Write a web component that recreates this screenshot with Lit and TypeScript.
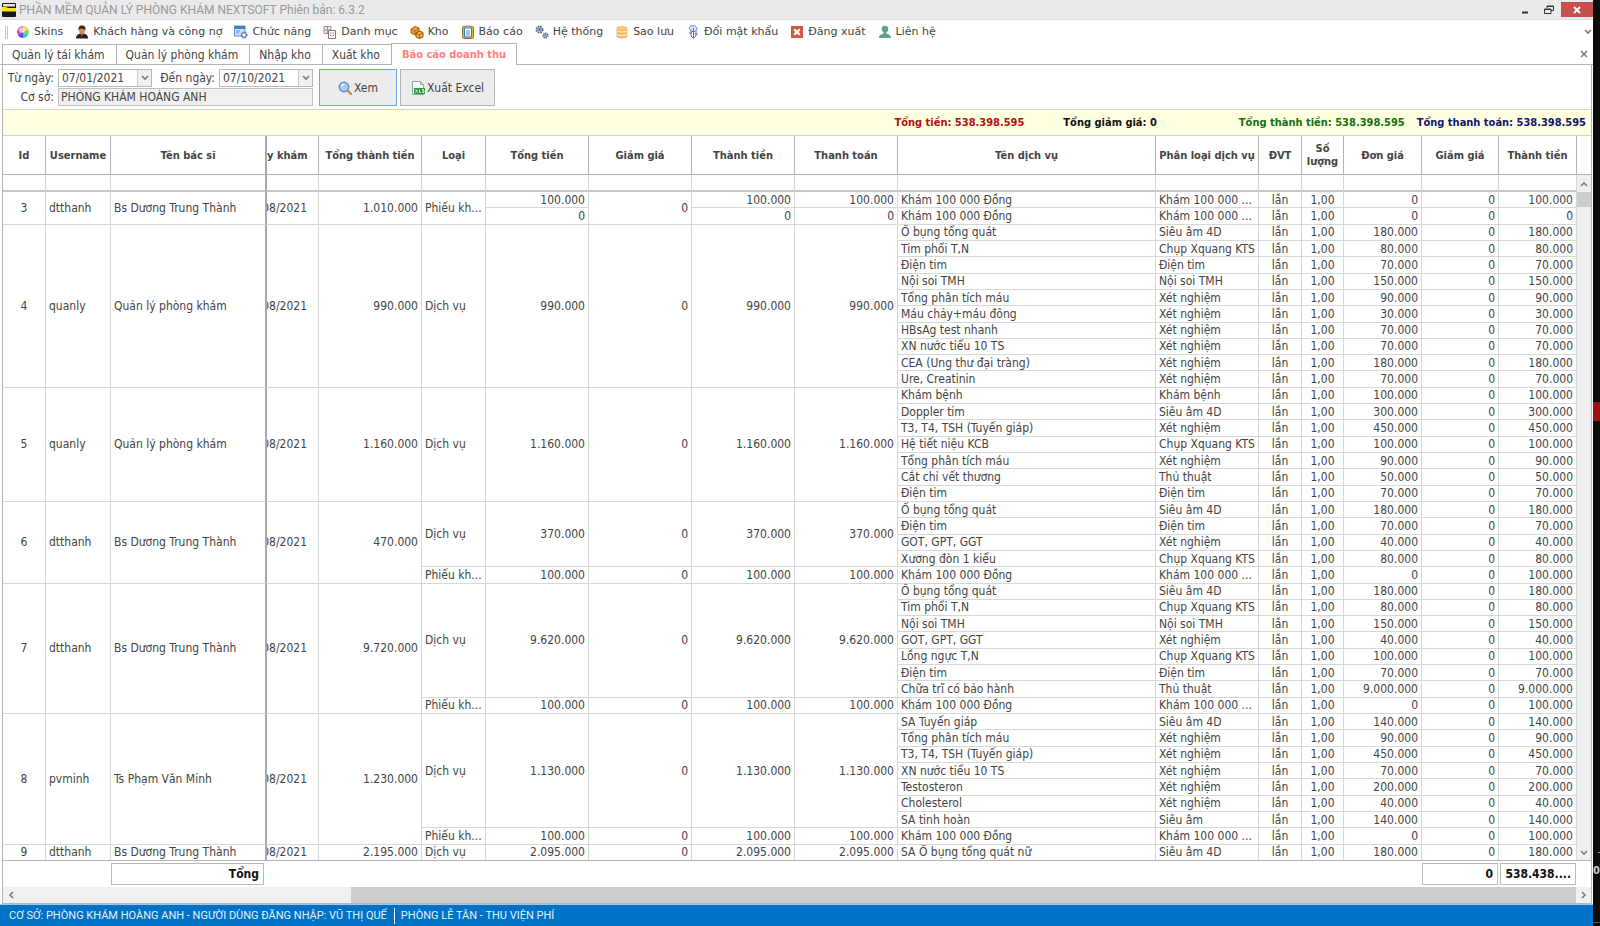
import { LitElement, html, css, svg, nothing } from "lit";
import { customElement } from "lit/decorators.js";

type Service = [string, string, string, string];
interface Block { kind: string; total: string; services: Service[]; }
interface Visit { id: number; user: string; doctor: string; total: string; blocks: Block[]; }

const s = (name: string, group: string, price: string, sum = price): Service => [name, group, price, sum];
const lab = "Xét nghiệm";
const exam: Block = { kind: "Phiếu kh...", total: "100.000", services: [s("Khám 100 000 Đồng", "Khám 100 000 ...", "0", "100.000")] };

const VISITS: Visit[] = [
  { id: 4, user: "quanly", doctor: "Quản lý phòng khám", total: "990.000", blocks: [{ kind: "Dịch vụ", total: "990.000", services: [
    s("Ổ bụng tổng quát", "Siêu âm 4D", "180.000"), s("Tim phổi T,N", "Chụp Xquang KTS", "80.000"), s("Điện tim", "Điện tim", "70.000"),
    s("Nội soi TMH", "Nội soi TMH", "150.000"), s("Tổng phân tích máu", lab, "90.000"), s("Máu chảy+máu đông", lab, "30.000"),
    s("HBsAg test nhanh", lab, "70.000"), s("XN nước tiểu 10 TS", lab, "70.000"), s("CEA (Ung thư đại tràng)", lab, "180.000"), s("Ure, Creatinin", lab, "70.000")] }] },
  { id: 5, user: "quanly", doctor: "Quản lý phòng khám", total: "1.160.000", blocks: [{ kind: "Dịch vụ", total: "1.160.000", services: [
    s("Khám bệnh", "Khám bệnh", "100.000"), s("Doppler tim", "Siêu âm 4D", "300.000"), s("T3, T4, TSH (Tuyến giáp)", lab, "450.000"),
    s("Hệ tiết niệu KCB", "Chụp Xquang KTS", "100.000"), s("Tổng phân tích máu", lab, "90.000"), s("Cắt chỉ vết thương", "Thủ thuật", "50.000"), s("Điện tim", "Điện tim", "70.000")] }] },
  { id: 6, user: "dtthanh", doctor: "Bs Dương Trung Thành", total: "470.000", blocks: [{ kind: "Dịch vụ", total: "370.000", services: [
    s("Ổ bụng tổng quát", "Siêu âm 4D", "180.000"), s("Điện tim", "Điện tim", "70.000"), s("GOT, GPT, GGT", lab, "40.000"), s("Xương đòn 1 kiểu", "Chụp Xquang KTS", "80.000")] }, exam] },
  { id: 7, user: "dtthanh", doctor: "Bs Dương Trung Thành", total: "9.720.000", blocks: [{ kind: "Dịch vụ", total: "9.620.000", services: [
    s("Ổ bụng tổng quát", "Siêu âm 4D", "180.000"), s("Tim phổi T,N", "Chụp Xquang KTS", "80.000"), s("Nội soi TMH", "Nội soi TMH", "150.000"),
    s("GOT, GPT, GGT", lab, "40.000"), s("Lồng ngực T,N", "Chụp Xquang KTS", "100.000"), s("Điện tim", "Điện tim", "70.000"), s("Chữa trĩ có bảo hành", "Thủ thuật", "9.000.000")] }, exam] },
  { id: 8, user: "pvminh", doctor: "Ts Phạm Văn Minh", total: "1.230.000", blocks: [{ kind: "Dịch vụ", total: "1.130.000", services: [
    s("SA Tuyến giáp", "Siêu âm 4D", "140.000"), s("Tổng phân tích máu", lab, "90.000"), s("T3, T4, TSH (Tuyến giáp)", lab, "450.000"),
    s("XN nước tiểu 10 TS", lab, "70.000"), s("Testosteron", lab, "200.000"), s("Cholesterol", lab, "40.000"), s("SA tinh hoàn", "Siêu âm", "140.000")] }, exam] },
  { id: 9, user: "dtthanh", doctor: "Bs Dương Trung Thành", total: "2.195.000", blocks: [{ kind: "Dịch vụ", total: "2.095.000", services: [
    s("SA Ổ bụng tổng quát nữ", "Siêu âm 4D", "180.000")] }] },
];

const HEADS = ["Id", "Username", "Tên bác sĩ", "y khám", "Tổng thành tiền", "Loại", "Tổng tiền", "Giảm giá", "Thành tiền", "Thanh toán",
  "Tên dịch vụ", "Phân loại dịch vụ", "ĐVT", "Số lượng", "Đơn giá", "Giảm giá", "Thành tiền"];

const ICONS: Record<string, unknown> = {
  skins: svg`<circle cx="7" cy="7" r="6" fill="#fff"/><path d="M7 7V1A6 6 0 0 1 12.2 4z" fill="#f7d65a"/><path d="M7 7l5.2-3a6 6 0 0 1 0 6z" fill="#7be04a"/><path d="M7 7l5.2 3A6 6 0 0 1 7 13z" fill="#35c8d8"/><path d="M7 7v6a6 6 0 0 1-5.200-3z" fill="#5a50e0"/><path d="M7 7l-5.200 3a6 6 0 0 1 0-6z" fill="#e23cc8"/><path d="M7 7L1.800 4A6 6 0 0 1 7 1z" fill="#f6607a"/><circle cx="6" cy="5" r="2.800" fill="#fff" opacity=".65"/>`,
  person: svg`<path d="M1 13.500c0-3.500 2-5 6-5s6 1.500 6 5z" fill="#2a2525"/><path d="M5.500 8.500L7 12l1.500-3.500z" fill="#b54a3a"/><ellipse cx="7" cy="5" rx="3" ry="4" fill="#c98d5e"/><path d="M3.600 5.500C3 1.500 5 .5 7.200.5S11 2 10.400 5.500C9.500 3.500 6 4 5 3.500z" fill="#3b2417"/>`,
  form: svg`<rect x=".5" y="1" width="10.500" height="10" fill="#d5e6f8" stroke="#5b8fc9"/><rect x="1" y="1" width="10" height="3" fill="#3f7fc8"/><path d="M2 6h4M2 8h3" stroke="#5b8fc9"/><circle cx="10" cy="10" r="2.800" fill="#9db8d8" stroke="#5c7698" stroke-dasharray="1.500 .8" stroke-width="1.500"/><circle cx="10" cy="10" r="1.200" fill="#fff"/>`,
  list: svg`<path d="M1 1.500h7v7H1zM1 5h7M4.500 1.500v7" fill="#f4ecea" stroke="#a58c8c"/><path d="M5.500 5.500h7v8h-7z" fill="#fff" stroke="#7a7a98"/><path d="M7 8h1.500M7 10.500h1.500M9.500 8H11M9.500 10.500H11" stroke="#c56b6b" stroke-width="1.200"/>`,
  boxes: svg`<path d="M1 4l4-2.500L9 3v5L5 10 1 8z" fill="#e9a12c" stroke="#a86410"/><path d="M1 4l4 2 4-3M5 6v4" stroke="#a86410" fill="none" stroke-width=".8"/><path d="M6 8l3.500-2L13 7.500V12l-3.500 1.500L6 12z" fill="#f0b243" stroke="#8e5009"/><path d="M6 8l3.500 2L13 7.500M9.500 10v3.500" stroke="#8e5009" fill="none" stroke-width=".8"/>`,
  report: svg`<rect x="1.500" y="1.500" width="11" height="12" rx="1" fill="#e8b040" stroke="#9b7430"/><path d="M3.500 3h7v9h-7z" fill="#f6fbff" stroke="#3c7cb8"/><rect x="4.500" y=".5" width="5" height="2.500" fill="#8fa0b0"/><path d="M5 6h4M5 8h4M5 10h4" stroke="#4f8fc6"/>`,
  gears: svg`<circle cx="4.500" cy="4.500" r="3" fill="#c8d3ea" stroke="#5a6a98" stroke-width="2" stroke-dasharray="1.600 .8"/><circle cx="4.500" cy="4.500" r="1.200" fill="#4f5f90"/><circle cx="10.500" cy="10.500" r="2.300" fill="#c8d3ea" stroke="#5a6a98" stroke-width="1.600" stroke-dasharray="1.300 .6"/><circle cx="10.500" cy="10.500" r=".9" fill="#4f5f90"/>`,
  disk: svg`<path d="M1.500 3v8.500c0 2.600 11 2.600 11 0V3z" fill="#f0bb68"/><ellipse cx="7" cy="2.800" rx="5.500" ry="2" fill="#f5ca85"/><path d="M1.500 5.500c1 2 10 2 11 0M1.500 9c1 2 10 2 11 0" fill="none" stroke="#fff" stroke-width=".8"/>`,
  key: svg`<path d="M4 4.500C2 2 5 .5 7.500.8S12 3 10.500 5L9 6.500H5.500z" fill="#dfe6fa" stroke="#5a74c4"/><path d="M7.500 3v10M5 6v5l2.500 2.500L10 11V6M3 8h3M9 9h3" fill="none" stroke="#5a74c4"/>`,
  exit: svg`<rect x="1" y="1" width="12" height="12" fill="#d2553d"/><path d="M4.200 4.200l5.600 5.600M9.800 4.200L4.200 9.800" stroke="#fff" stroke-width="2.300"/>`,
  contact: svg`<circle cx="7" cy="4" r="3.300" fill="#5da48a"/><path d="M1 13c0-3.500 3-3.500 4.500-4.500V6h3v2.500C10 9.500 13 9.500 13 13z" fill="#5da48a"/>`,
  search: svg`<path d="M9.500 9.500l3.500 3.500" stroke="#c08a4c" stroke-width="2.400" stroke-linecap="round"/><circle cx="6" cy="6" r="4.700" fill="#a9cdf2" stroke="#5f8cc8" stroke-width="1.500"/><path d="M3.500 5.500A2.800 2.800 0 0 1 6 3.200" stroke="#fff" fill="none" stroke-width="1.300"/>`,
  excel: svg`<path d="M1.500.5h8l3 3v10h-11z" fill="#f8fbf8" stroke="#8fa89a"/><path d="M9.500.5v3h3" fill="none" stroke="#8fa89a"/><rect x="3" y="7" width="11" height="6" fill="#2f9a3c"/><path d="M4.500 8.500l2 3M6.500 8.500l-2 3M8.500 8.500v3H10M13 8.500h-1.500v1.500H13v1.500h-1.800" stroke="#fff" fill="none" stroke-width=".8"/>`,
};
const icon = (n: string) => html`<svg class="ico" viewBox="0 0 14 14" aria-hidden="true">${ICONS[n]}</svg>`;
const chevron = (d: string) => html`<svg class="chev" viewBox="0 0 8 8" aria-hidden="true"><path d=${d} fill="none" stroke="#7c7c7c" stroke-width="1.600"/></svg>`;
const UP = "M1 6l3-3 3 3", DOWN = "M1 2l3 3 3-3", LEFT = "M6 1L3 4l3 3", RIGHT = "M2 1l3 3-3 3";

const MENU: [string, string][] = [["skins", "Skins"], ["person", "Khách hàng và công nợ"], ["form", "Chức năng"], ["list", "Danh mục"], ["boxes", "Kho"],
  ["report", "Báo cáo"], ["gears", "Hệ thống"], ["disk", "Sao lưu"], ["key", "Đổi mật khẩu"], ["exit", "Đăng xuất"], ["contact", "Liên hệ"]];

@customElement("app-root")
export class AppRoot extends LitElement {
  static styles = css`
    :host { display: flex; height: 100vh; overflow: hidden; background: #0d0d0d; color: #444; font: 12px/14px "DejaVu Sans Condensed", "DejaVu Sans", sans-serif; }
    * { box-sizing: border-box; }
    button, input { font: inherit; color: inherit; margin: 0; }
    .window { flex: 1; min-width: 0; display: flex; flex-direction: column; background: #fff; }
    .edge { flex: none; width: 7px; overflow: hidden; display: flex; flex-direction: column; align-items: flex-end; color: #ccc; font-size: 11px; font-weight: bold; }
    .edge .gap { height: 402px; }
    .edge .mark { width: 100%; height: 19px; background: #9c1111; margin-bottom: auto; }
    .edge .tick { width: 2px; height: 1px; background: #999; margin-bottom: 11px; }
    .edge .foot { width: 100%; height: 4px; border-top: 1px solid #555; margin-top: 44px; }
    .ico { width: 14px; height: 14px; flex: none; display: block; }
    .chev { width: 8px; height: 8px; display: block; }

    .title { height: 20px; display: flex; align-items: center; background: #eaeaea; border-bottom: 1px solid #e0e0e0; color: #999; padding-left: 5px; font: 12px/16px Roboto, sans-serif; }
    .logo { width: 14px; height: 14px; flex: none; margin: 0 3px 0 -3px; }
    .title h1 { font: inherit; margin: 0; flex: 1; white-space: nowrap; }
    .winbtn { border: 0; padding: 0; background: none; height: 15px; width: 24px; display: grid; place-items: center; }
    .winbtn.close { background: #c75050; width: 32px; }
    .winbtn svg { width: 10px; height: 10px; }

    .menu { height: 24px; display: flex; align-items: center; gap: 12px; padding: 0 1px 0 5px; font: 11px/14px "DejaVu Sans", sans-serif; }
    .grip { width: 3px; height: 13px; border: 1px solid #c4c4c4; border-width: 0 1px; margin-right: -4px; }
    .menu button { border: 0; background: none; padding: 0; display: flex; align-items: center; gap: 4px; white-space: nowrap; }
    .menu .more { margin-left: auto; }

    .tabs { height: 21px; display: flex; align-items: flex-end; padding-left: 2px; border-bottom: 1px solid #b4b4b4; }
    .tabs button { height: 20px; border: 1px solid #b4b4b4; border-bottom: 0; border-right: 0; background: #fff; padding: 0 11px 0 9px; white-space: nowrap; }
    .tabs .active { height: 22px; margin-bottom: -1px; border-right: 1px solid #b4b4b4; color: #ff8080; font-weight: bold; font-size: 11px; padding: 0 10px; }
    .tabs .shut { margin-left: auto; border: 0; padding: 0 5px; display: flex; align-items: center; }

    .page { flex: 1; min-height: 0; margin: 0 1px 0 2px; border: 1px solid #b4b4b4; border-top: 0; display: flex; flex-direction: column; }
    .filters { display: flex; padding: 4px; gap: 6px; height: 44px; }
    .fields { display: grid; grid-template-columns: 47px 94px 59px 94px; column-gap: 4px; row-gap: 2px; grid-template-rows: 17px 17px; align-items: center; }
    .fields label { text-align: right; white-space: nowrap; }
    .fields .date { display: flex; height: 18px; border: 1px solid #b9b9b9; }
    .date input { flex: 1; min-width: 0; border: 0; padding: 0 3px; background: #fff; outline: 0; }
    .date button { width: 14px; border: 0; border-left: 1px solid #c8c8c8; background: #f0f0f0; padding: 0; display: grid; place-items: center; }
    .fields .place { grid-column: 2 / 5; height: 18px; width: 100%; border: 1px solid #c0c0c0; background: #f0f0f0; padding: 0 2px; outline: 0; }
    .act { display: flex; align-items: center; justify-content: center; gap: 2px; width: 78px; height: 37px; background: #ececec; border: 1px solid #b4b4b4; padding: 0; white-space: nowrap; }
    .act.main { border-color: #6aa9ee; }
    .act.wide { width: 95px; margin-left: -3px; }

    .totals { height: 27px; display: flex; align-items: center; justify-content: flex-end; gap: 12px; background: #ffffe1; border: 1px solid #d5d5c4; border-width: 1px 0; padding-right: 5px; font-weight: bold; font-size: 11px; white-space: nowrap; }
    .red { color: #b30f0f; margin-right: 27px; }
    .black { color: #111; margin-right: 70px; }
    .green { color: #147014; }
    .blue { color: #14146e; }

    .grid { flex: 1; min-height: 0; display: flex; border-bottom: 1px solid #b4b4b4; }
    table { flex: 1; min-width: 0; width: 100%; height: 100%; table-layout: fixed; border-collapse: separate; border-spacing: 0; }
    th { height: 39px; border-right: 1px solid #b4b4b4; border-bottom: 1px solid #b4b4b4; padding: 0 2px; font-weight: bold; font-size: 11px; line-height: 13px; }
    td { border-right: 1px solid #d6dad6; border-bottom: 1px solid #d6dad6; padding: 0 3px; line-height: 14px; white-space: nowrap; overflow: hidden; }
    td.c { text-align: center; padding: 0; }
    td.r { text-align: right; }
    th.split, td.split { border-right: 2px solid #a8a8a8; }
    th.day, td.day { text-align: right; padding: 0 11px 0 0; white-space: nowrap; overflow: hidden; }
    td.day div { display: flex; justify-content: flex-end; }
    .blank td { height: 17px; border-bottom: 2px solid #c4c8c4; }
    tbody tr:last-child td { border-bottom: 0; }
    .w43 { width: 43px; } .w42 { width: 42px; } .w65 { width: 65px; } .w156 { width: 156px; } .w52 { width: 52px; } .w103 { width: 103px; } .w64 { width: 64px; } .w78 { width: 78px; } .w77 { width: 77px; }
    .vbar { flex: none; width: 14px; display: flex; flex-direction: column; align-items: center; background: #f0f0f0; padding-bottom: 3px; }
    .vbar .cap { width: 100%; height: 39px; background: #fff; border-bottom: 1px solid #b4b4b4; }
    .vbar .arrow { height: 17px; display: grid; place-items: center; }
    .vbar .thumb { width: 100%; height: 15px; background: #cdcdcd; margin-bottom: auto; }

    .sums { height: 26px; display: flex; align-items: center; padding: 0 15px 0 108px; gap: 2px; color: #111; font-weight: bold; }
    .sum { height: 22px; border: 1px solid #b9b9b9; text-align: right; padding: 3px 4px; width: 76px; white-space: nowrap; }
    .sum.name { width: 153px; margin-right: auto; }
    .hbar { height: 16px; display: flex; align-items: center; background: #f0f0f0; }
    .hbar .arrow { width: 15px; display: grid; place-items: center; }
    .hbar .track { flex: 1; height: 100%; padding-left: 21%; }
    .hbar .thumb { height: 100%; background: #cdcdcd; }
    .status { height: 22px; display: flex; align-items: center; background: #0072c6; border-top: 1px solid #9cc8ea; color: #e4f1fb; padding-left: 9px; font: 11px/16px Roboto, sans-serif; white-space: nowrap; }
    .status span + span { border-left: 1px solid #fff; margin-left: 7px; padding-left: 6px; }
  `;

  private service([name, group, price, sum]: Service) {
    return html`<td>${name}</td><td>${group}</td><td class="c">lần</td><td class="c">1,00</td><td class="r">${price}</td><td class="r">0</td><td class="r">${sum}</td>`;
  }

  private lead(n: number, id: number, user: string, doctor: string, total: string) {
    return html`<td class="c" rowspan=${n}>${id}</td><td rowspan=${n}>${user}</td><td class="split" rowspan=${n}>${doctor}</td>
      <td class="day" rowspan=${n}><div>08/2021</div></td><td class="r" rowspan=${n}>${total}</td>`;
  }

  private visit(v: Visit) {
    const count = v.blocks.reduce((n, b) => n + b.services.length, 0);
    return v.blocks.map((b, bi) => b.services.map((sv, si) => {
      const n = b.services.length;
      return html`<tr>
        ${bi === 0 && si === 0 ? this.lead(count, v.id, v.user, v.doctor, v.total) : nothing}
        ${si === 0 ? html`<td rowspan=${n}>${b.kind}</td><td class="r" rowspan=${n}>${b.total}</td><td class="r" rowspan=${n}>0</td><td class="r" rowspan=${n}>${b.total}</td><td class="r" rowspan=${n}>${b.total}</td>` : nothing}
        ${this.service(sv)}</tr>`;
    }));
  }

  render() {
    const widths = [43, 65, 156, 52, 103, 64, 103, 103, 103, 103, 0, 103, 43, 42, 78, 77, 78];
    return html`
      <div class="window">
        <header class="title">
          <svg class="logo" viewBox="0 0 14 14" aria-hidden="true"><rect width="14" height="14" rx="1" fill="#1a1a1a"/><rect x="1" y="1" width="12" height="2.500" fill="#e8e8d8"/><path d="M0 8.500V4h4l2 1h8v3.500z" fill="#f5e51b"/></svg>
          <h1>PHẦN MỀM QUẢN LÝ PHÒNG KHÁM NEXTSOFT Phiên bản: 6.3.2</h1>
          <button class="winbtn" aria-label="Thu nhỏ"><svg viewBox="0 0 10 10"><path d="M2 7.500h6" stroke="#333" stroke-width="2"/></svg></button>
          <button class="winbtn" aria-label="Khôi phục"><svg viewBox="0 0 10 10"><path d="M3 3V1h6.500v4.500H7" fill="none" stroke="#333"/><path d="M.5 4h6.500v4.500H.5z" fill="none" stroke="#333"/><path d="M3 1.500h6.500M.5 4.500H7" stroke="#333"/></svg></button>
          <button class="winbtn close" aria-label="Đóng"><svg viewBox="0 0 10 10"><path d="M2 2l6 6M8 2L2 8" stroke="#fff" stroke-width="1.800"/></svg></button>
        </header>
        <nav class="menu"><div class="grip"></div>
          ${MENU.map(([i, t]) => html`<button>${icon(i)}${t}</button>`)}
          <button class="more" aria-label="Thêm">${chevron(DOWN)}</button>
        </nav>
        <nav class="tabs">
          <button>Quản lý tái khám</button><button>Quản lý phòng khám</button><button>Nhập kho</button><button>Xuất kho</button><button class="active">Báo cáo doanh thu</button>
          <button class="shut" aria-label="Đóng tab">${chevron("M1 1l6 6M7 1L1 7")}</button>
        </nav>
        <main class="page">
          <form class="filters">
            <div class="fields">
              <label for="from">Từ ngày:</label>
              <div class="date"><input id="from" value="07/01/2021"><button type="button" aria-label="Chọn ngày">${chevron(DOWN)}</button></div>
              <label for="to">Đến ngày:</label>
              <div class="date"><input id="to" value="07/10/2021"><button type="button" aria-label="Chọn ngày">${chevron(DOWN)}</button></div>
              <label for="place">Cơ sở:</label>
              <input class="place" id="place" readonly value="PHÒNG KHÁM HOÀNG ANH">
            </div>
            <button type="button" class="act main">${icon("search")}Xem</button>
            <button type="button" class="act wide">${icon("excel")}Xuất Excel</button>
          </form>
          <div class="totals">
            <span class="red">Tổng tiền: 538.398.595</span><span class="black">Tổng giảm giá: 0</span>
            <span class="green">Tổng thành tiền: 538.398.595</span><span class="blue">Tổng thanh toán: 538.398.595</span>
          </div>
          <div class="grid">
            <table>
              <colgroup>${widths.map((w) => html`<col class=${w ? "w" + w : "auto"}>`)}</colgroup>
              <thead>
                <tr>${HEADS.map((h, i) => html`<th scope="col" class=${i === 2 ? "split" : i === 3 ? "day" : ""}>${h}</th>`)}</tr>
                <tr class="blank">${HEADS.map((_, i) => html`<td class=${i === 2 ? "split" : ""}></td>`)}</tr>
              </thead>
              <tbody>
                <tr>${this.lead(2, 3, "dtthanh", "Bs Dương Trung Thành", "1.010.000")}<td rowspan="2">Phiếu kh...</td>
                  <td class="r">100.000</td><td class="r" rowspan="2">0</td><td class="r">100.000</td><td class="r">100.000</td>
                  ${this.service(s("Khám 100 000 Đồng", "Khám 100 000 ...", "0", "100.000"))}</tr>
                <tr><td class="r">0</td><td class="r">0</td><td class="r">0</td>${this.service(s("Khám 100 000 Đồng", "Khám 100 000 ...", "0"))}</tr>
                ${VISITS.map((v) => this.visit(v))}
              </tbody>
            </table>
            <div class="vbar"><div class="cap"></div><div class="arrow">${chevron(UP)}</div><div class="thumb"></div>${chevron(DOWN)}</div>
          </div>
          <div class="sums"><div class="sum name">Tổng</div><div class="sum">0</div><div class="sum">538.438....</div></div>
          <div class="hbar"><div class="arrow">${chevron(LEFT)}</div><div class="track"><div class="thumb"></div></div><div class="arrow">${chevron(RIGHT)}</div></div>
        </main>
        <footer class="status"><span>CƠ SỞ: PHÒNG KHÁM HOÀNG ANH - NGƯỜI DÙNG ĐĂNG NHẬP: VŨ THỊ QUẾ</span><span>PHÒNG LỄ TÂN - THU VIỆN PHÍ</span></footer>
      </div>
      <div class="edge"><div class="gap"></div><div class="mark"></div><div class="tick"></div><div>0</div><div class="foot"></div></div>`;
  }
}
